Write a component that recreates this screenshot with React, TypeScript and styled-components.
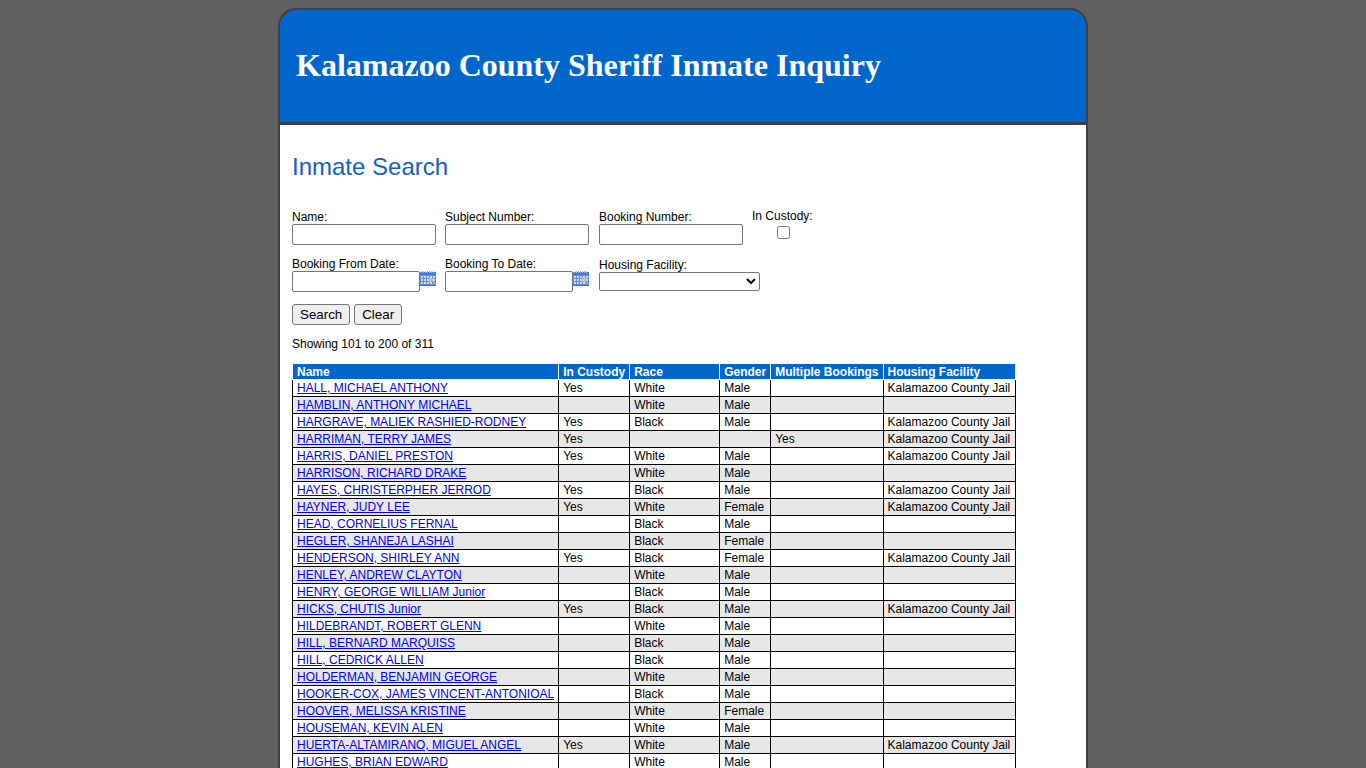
import React from "react";
import styled, { createGlobalStyle } from "styled-components";

const GlobalStyle = createGlobalStyle`
  body {
    margin: 0;
    background: #606060;
    color: #000;
    font: 12px/14px "Liberation Sans", Arial, sans-serif;
  }
`;

const Page = styled.div`
  box-sizing: border-box;
  max-width: 810px;
  margin: 8px auto;
  border: 2px solid #404040;
  border-radius: 18px 18px 0 0;
  background: #0066cc;
`;

const Header = styled.header`
  padding: 35px 16px 37px;
  border-bottom: 3px solid #404040;
`;

const SiteTitle = styled.h1`
  margin: 0;
  color: #fff;
  font: bold 32px/40px "Liberation Serif", "Times New Roman", serif;
`;

const Main = styled.main`
  padding: 28px 12px;
  background: #fff;
`;

const Heading = styled.h2`
  margin: 0 0 28px;
  color: #1560c0;
  font-size: 24px;
  font-weight: normal;
  line-height: 28px;
`;

const Fields = styled.div`
  display: grid;
  grid-template-columns: 153px 154px 153px 1fr;
  grid-template-rows: 36px auto;
  row-gap: 12px;
`;

const Field = styled.div<{ $align?: "start" | "center" | "end"; $centered?: boolean; $wide?: boolean }>`
  display: flex;
  flex-direction: column;
  justify-self: start;
  align-self: ${(p) => p.$align ?? "end"};
  align-items: ${(p) => (p.$centered ? "center" : "flex-start")};
  grid-column: ${(p) => (p.$wide ? "span 2" : "auto")};
`;

const TextBox = styled.input<{ $short?: boolean }>`
  box-sizing: border-box;
  width: ${(p) => (p.$short ? "128px" : "144px")};
  height: 21px;
  margin: 0;
  padding: 1px 2px;
  border: 1px solid #767676;
  border-radius: 2px;
  background: #fff;
`;

const CheckBox = styled.input`
  width: 13px;
  height: 13px;
  margin: 3px 0 4px 3px;
`;

const Select = styled.select`
  box-sizing: border-box;
  width: 161px;
  height: 19px;
  margin: 0;
  border: 1px solid #767676;
  border-radius: 2px;
  background: #fff;
  font-family: inherit;
`;

const DateRow = styled.div`
  display: flex;
  align-items: flex-start;
`;

const CalendarButton = styled.button`
  display: block;
  width: 16px;
  height: 15px;
  padding: 0;
  border: 0;
  background: none;

  svg {
    display: block;
  }
`;

const Actions = styled.div`
  display: flex;
  gap: 4px;
  margin: 12px 0;
`;

const Button = styled.button`
  height: 21px;
  padding: 0 7px;
  border: 1px solid #767676;
  border-radius: 3px;
  background: #efefef;
  color: #000;
  font-family: inherit;
`;

const Summary = styled.p`
  margin: 0 0 12px;
`;

const Table = styled.table`
  border-collapse: collapse;
`;

const HeadCell = styled.th`
  padding: 1px 4px 0;
  border: 1px solid #fff;
  background: #0066cc;
  color: #fff;
  text-align: left;
  white-space: nowrap;
`;

const Row = styled.tr`
  background: #fff;

  &:nth-child(even) {
    background: #e7e7e7;
  }
`;

const Cell = styled.td`
  height: 14px;
  padding: 1px 4px;
  border: 1px solid #000;
  white-space: nowrap;
`;

const InmateLink = styled.a`
  color: #0000ee;
`;

const Col = styled.col<{ $width: number }>`
  width: ${(p) => p.$width}px;
`;

const CalendarIcon = () => (
  <svg width="16" height="15" viewBox="0 0 16 15" aria-hidden="true">
    <rect y="1" width="16" height="14" fill="#5f8fe6" />
    <rect y="1" width="16" height="3" fill="#4478dc" />
    <rect y="14" width="16" height="1" fill="#3f6fcb" />
    <path d="M1 0h1v2H1zM3 0h1v2H3zM5 0h1v2H5zM7 0h1v2H7zM9 0h1v2H9zM11 0h1v2h-1zM13 0h1v2h-1z" fill="#9db8ee" />
    <path d="M1 5h2v2H1zM4 5h2v2H4zM7 5h2v2H7zM10 5h2v2h-2zM13 5h2v2h-2zM1 8h2v2H1zM4 8h2v2H4zM7 8h2v2H7zM13 8h2v2h-2zM1 11h2v2H1zM4 11h2v2H4zM7 11h2v2H7zM10 11h2v2h-2z" fill="#c9dcfb" />
    <path d="M13 11h2v2h-2z" fill="#8fb2ef" />
    <rect x="9" y="7" width="4" height="4" fill="#e2b59c" />
    <rect x="10" y="8" width="2" height="2" fill="#f2ae78" />
  </svg>
);

const DateField = ({ id, label }: { id: string; label: string }) => (
  <Field>
    <label htmlFor={id}>{label}</label>
    <DateRow>
      <TextBox $short id={id} type="text" />
      <CalendarButton type="button" aria-label="Pick a date">
        <CalendarIcon />
      </CalendarButton>
    </DateRow>
  </Field>
);

type Inmate = [name: string, custody: boolean, race: string, gender: string, multiple?: boolean];

const inmates: Inmate[] = [
  ["HALL, MICHAEL ANTHONY", true, "White", "Male"],
  ["HAMBLIN, ANTHONY MICHAEL", false, "White", "Male"],
  ["HARGRAVE, MALIEK RASHIED-RODNEY", true, "Black", "Male"],
  ["HARRIMAN, TERRY JAMES", true, "", "", true],
  ["HARRIS, DANIEL PRESTON", true, "White", "Male"],
  ["HARRISON, RICHARD DRAKE", false, "White", "Male"],
  ["HAYES, CHRISTERPHER JERROD", true, "Black", "Male"],
  ["HAYNER, JUDY LEE", true, "White", "Female"],
  ["HEAD, CORNELIUS FERNAL", false, "Black", "Male"],
  ["HEGLER, SHANEJA LASHAI", false, "Black", "Female"],
  ["HENDERSON, SHIRLEY ANN", true, "Black", "Female"],
  ["HENLEY, ANDREW CLAYTON", false, "White", "Male"],
  ["HENRY, GEORGE WILLIAM Junior", false, "Black", "Male"],
  ["HICKS, CHUTIS Junior", true, "Black", "Male"],
  ["HILDEBRANDT, ROBERT GLENN", false, "White", "Male"],
  ["HILL, BERNARD MARQUISS", false, "Black", "Male"],
  ["HILL, CEDRICK ALLEN", false, "Black", "Male"],
  ["HOLDERMAN, BENJAMIN GEORGE", false, "White", "Male"],
  ["HOOKER-COX, JAMES VINCENT-ANTONIOAL", false, "Black", "Male"],
  ["HOOVER, MELISSA KRISTINE", false, "White", "Female"],
  ["HOUSEMAN, KEVIN ALEN", false, "White", "Male"],
  ["HUERTA-ALTAMIRANO, MIGUEL ANGEL", true, "White", "Male"],
  ["HUGHES, BRIAN EDWARD", false, "White", "Male"],
];

const columns = [
  { title: "Name", width: 266 },
  { title: "In Custody", width: 71 },
  { title: "Race", width: 90 },
  { title: "Gender", width: 51 },
  { title: "Multiple Bookings", width: 112 },
  { title: "Housing Facility", width: 132 },
];

export default function App() {
  return (
    <>
      <GlobalStyle />
      <Page>
        <Header>
          <SiteTitle>Kalamazoo County Sheriff Inmate Inquiry</SiteTitle>
        </Header>
        <Main>
          <Heading>Inmate Search</Heading>
          <form onSubmit={(e) => e.preventDefault()}>
            <Fields>
              <Field>
                <label htmlFor="name">Name:</label>
                <TextBox id="name" type="text" />
              </Field>
              <Field>
                <label htmlFor="subject">Subject Number:</label>
                <TextBox id="subject" type="text" />
              </Field>
              <Field>
                <label htmlFor="booking">Booking Number:</label>
                <TextBox id="booking" type="text" />
              </Field>
              <Field $align="start" $centered>
                <label htmlFor="custody">In Custody:</label>
                <CheckBox id="custody" type="checkbox" />
              </Field>
              <DateField id="from" label="Booking From Date:" />
              <DateField id="to" label="Booking To Date:" />
              <Field $align="center" $wide>
                <label htmlFor="facility">Housing Facility:</label>
                <Select id="facility">
                  <option value="" />
                </Select>
              </Field>
            </Fields>
            <Actions>
              <Button type="submit">Search</Button>
              <Button type="reset">Clear</Button>
            </Actions>
          </form>
          <Summary>Showing 101 to 200 of 311</Summary>
          <Table>
            <colgroup>
              {columns.map((c) => (
                <Col key={c.title} $width={c.width} />
              ))}
            </colgroup>
            <thead>
              <tr>
                {columns.map((c) => (
                  <HeadCell key={c.title} scope="col">
                    {c.title}
                  </HeadCell>
                ))}
              </tr>
            </thead>
            <tbody>
              {inmates.map(([name, custody, race, gender, multiple]) => (
                <Row key={name}>
                  <Cell>
                    <InmateLink href="#">{name}</InmateLink>
                  </Cell>
                  <Cell>{custody && "Yes"}</Cell>
                  <Cell>{race}</Cell>
                  <Cell>{gender}</Cell>
                  <Cell>{multiple && "Yes"}</Cell>
                  <Cell>{custody && "Kalamazoo County Jail"}</Cell>
                </Row>
              ))}
            </tbody>
          </Table>
        </Main>
      </Page>
    </>
  );
}
